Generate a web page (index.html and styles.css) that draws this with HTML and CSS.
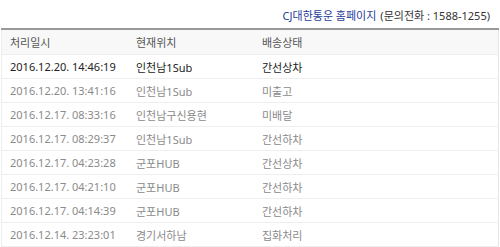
FILE: index.html
```html
<!DOCTYPE html>
<html lang="ko">
<head>
<meta charset="utf-8">
<link rel="stylesheet" href="styles.css">
</head>
<body>
<div class="wrap">
  <div class="top">
    <a class="home" href="#">CJ대한통운 홈페이지</a>
    <span class="tel">(문의전화 : 1588-1255)</span>
  </div>
  <table class="track">
    <thead>
      <tr><th>처리일시</th><th>현재위치</th><th>배송상태</th></tr>
    </thead>
    <tbody>
      <tr class="latest"><td>2016.12.20. 14:46:19</td><td>인천남1Sub</td><td>간선상차</td></tr>
      <tr><td>2016.12.20. 13:41:16</td><td>인천남1Sub</td><td>미출고</td></tr>
      <tr><td>2016.12.17. 08:33:16</td><td>인천남구신용현</td><td>미배달</td></tr>
      <tr><td>2016.12.17. 08:29:37</td><td>인천남1Sub</td><td>간선하차</td></tr>
      <tr><td>2016.12.17. 04:23:28</td><td>군포HUB</td><td>간선상차</td></tr>
      <tr><td>2016.12.17. 04:21:10</td><td>군포HUB</td><td>간선하차</td></tr>
      <tr><td>2016.12.17. 04:14:39</td><td>군포HUB</td><td>간선하차</td></tr>
      <tr><td>2016.12.14. 23:23:01</td><td>경기서하남</td><td>집화처리</td></tr>
    </tbody>
  </table>
</div>
</body>
</html>
```

FILE: styles.css
```css
html, body {
  margin: 0;
  padding: 0;
  background: #fff;
}
body {
  font-family: "Noto Sans", "Noto Sans CJK KR", sans-serif;
  font-size: 11px;
  color: #8a8a8a;
}
.wrap {
  width: 498px;
  padding-left: 1px;
}
.top {
  height: 28px;
  display: flex;
  justify-content: flex-end;
  align-items: center;
  gap: 4px;
  padding: 2px 9px 0 0;
  box-sizing: border-box;
  color: #333;
  font-size: 11px;
}
.home {
  color: #1f3a9a;
  text-decoration: none;
}
.track {
  width: 100%;
  border-collapse: collapse;
  border-top: 2px solid #999;
  border-left: 1px solid #eee;
  border-right: 1px solid #e4e4e4;
  table-layout: fixed;
}
.track th {
  background: #f8f8f8;
  color: #555;
  font-weight: normal;
  text-align: left;
  height: 24px;
  padding: 0 0 0 8px;
  border-bottom: 1px solid #eee;
}
.track td {
  height: 23px;
  padding: 0 0 0 8px;
  border-bottom: 1px solid #eee;
  white-space: nowrap;
}
.track tr.latest td {
  color: #222;
}
.track th:nth-child(1), .track td:nth-child(1) { width: 118px; }
.track th:nth-child(2), .track td:nth-child(2) { width: 118px; }
```
